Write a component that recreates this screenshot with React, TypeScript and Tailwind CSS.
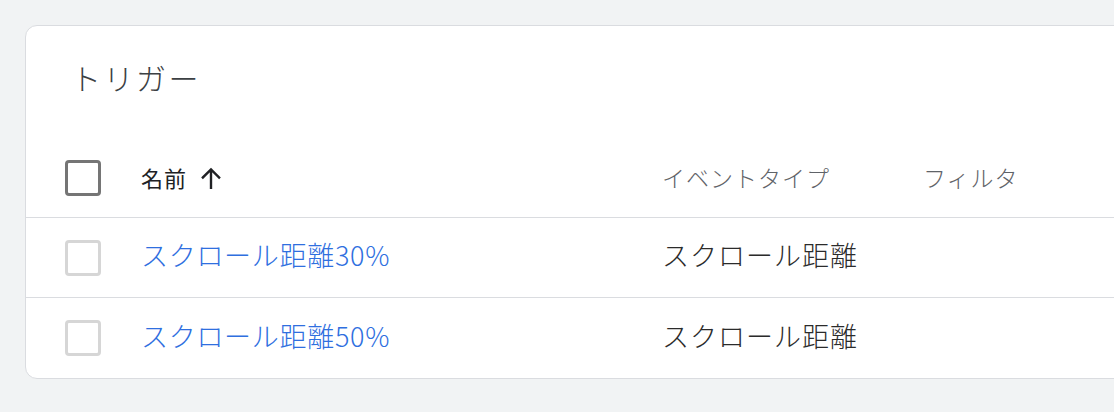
import React from 'react';

const font = { fontFamily: '"Noto Sans CJK JP", "Noto Sans", sans-serif' };

interface Trigger {
  name: string;
  type: string;
}

const triggers: Trigger[] = [
  { name: 'スクロール距離30%', type: 'スクロール距離' },
  { name: 'スクロール距離50%', type: 'スクロール距離' },
];

const Checkbox = ({ header }: { header?: boolean }) => (
  <div
    className={
      header
        ? 'w-[36px] h-[36px] rounded-[4px] border-[3px] border-[#757575] bg-white'
        : 'w-[36px] h-[36px] rounded-[4px] border-[3px] border-[#d6d6d6] bg-white'
    }
  />
);

const ArrowUp = () => (
  <svg width="26" height="26" viewBox="0 0 24 24" className="text-[#202124]">
    <path d="M12 21V4.5M4.5 11.5L12 4L19.5 11.5" fill="none" stroke="currentColor" strokeWidth="2.2" strokeLinecap="square" />
  </svg>
);

export default function App() {
  return (
    <div className="w-[1114px] h-[412px] bg-[#f1f3f4] overflow-hidden pt-[25px] pl-[25px]" style={font}>
      <div className="w-[1120px] bg-white border border-[#dadce0] rounded-[12px]">
        {/* Título */}
        <div className="h-[112px] pl-[45px] pt-[31px]">
          <h1 className="text-[30px] leading-[40px] font-light text-[#3c4043] tracking-[2.5px]">トリガー</h1>
        </div>

        {/* Cabecera */}
        <div className="flex items-center h-[80px] border-b border-[#dadce0]">
          <div className="w-[115px] pl-[39px] flex items-center">
            <Checkbox header />
          </div>
          <div className="w-[521px] flex items-center gap-[11px] text-[22px] text-[#202124] tracking-[1px]">
            <span>名前</span>
            <ArrowUp />
          </div>
          <div className="w-[261px] text-[23px] font-light text-[#5f6368] tracking-[1px]">イベントタイプ</div>
          <div className="text-[23px] font-light text-[#5f6368] tracking-[1px]">フィルタ</div>
        </div>

        {/* Filas */}
        {triggers.map((t, i) => (
          <div
            key={t.name}
            className={
              i < triggers.length - 1
                ? 'flex items-center h-[80px] border-b border-[#dadce0]'
                : 'flex items-center h-[80px]'
            }
          >
            <div className="w-[115px] pl-[39px] flex items-center">
              <Checkbox />
            </div>
            <div className="w-[521px] text-[27px] font-light text-[#2f6fdf] tracking-[0.7px] pb-[4px]">{t.name}</div>
            <div className="w-[261px] text-[27px] font-light text-[#2b2b2b] tracking-[1px] pb-[4px]">{t.type}</div>
            <div />
          </div>
        ))}
      </div>
    </div>
  );
}
